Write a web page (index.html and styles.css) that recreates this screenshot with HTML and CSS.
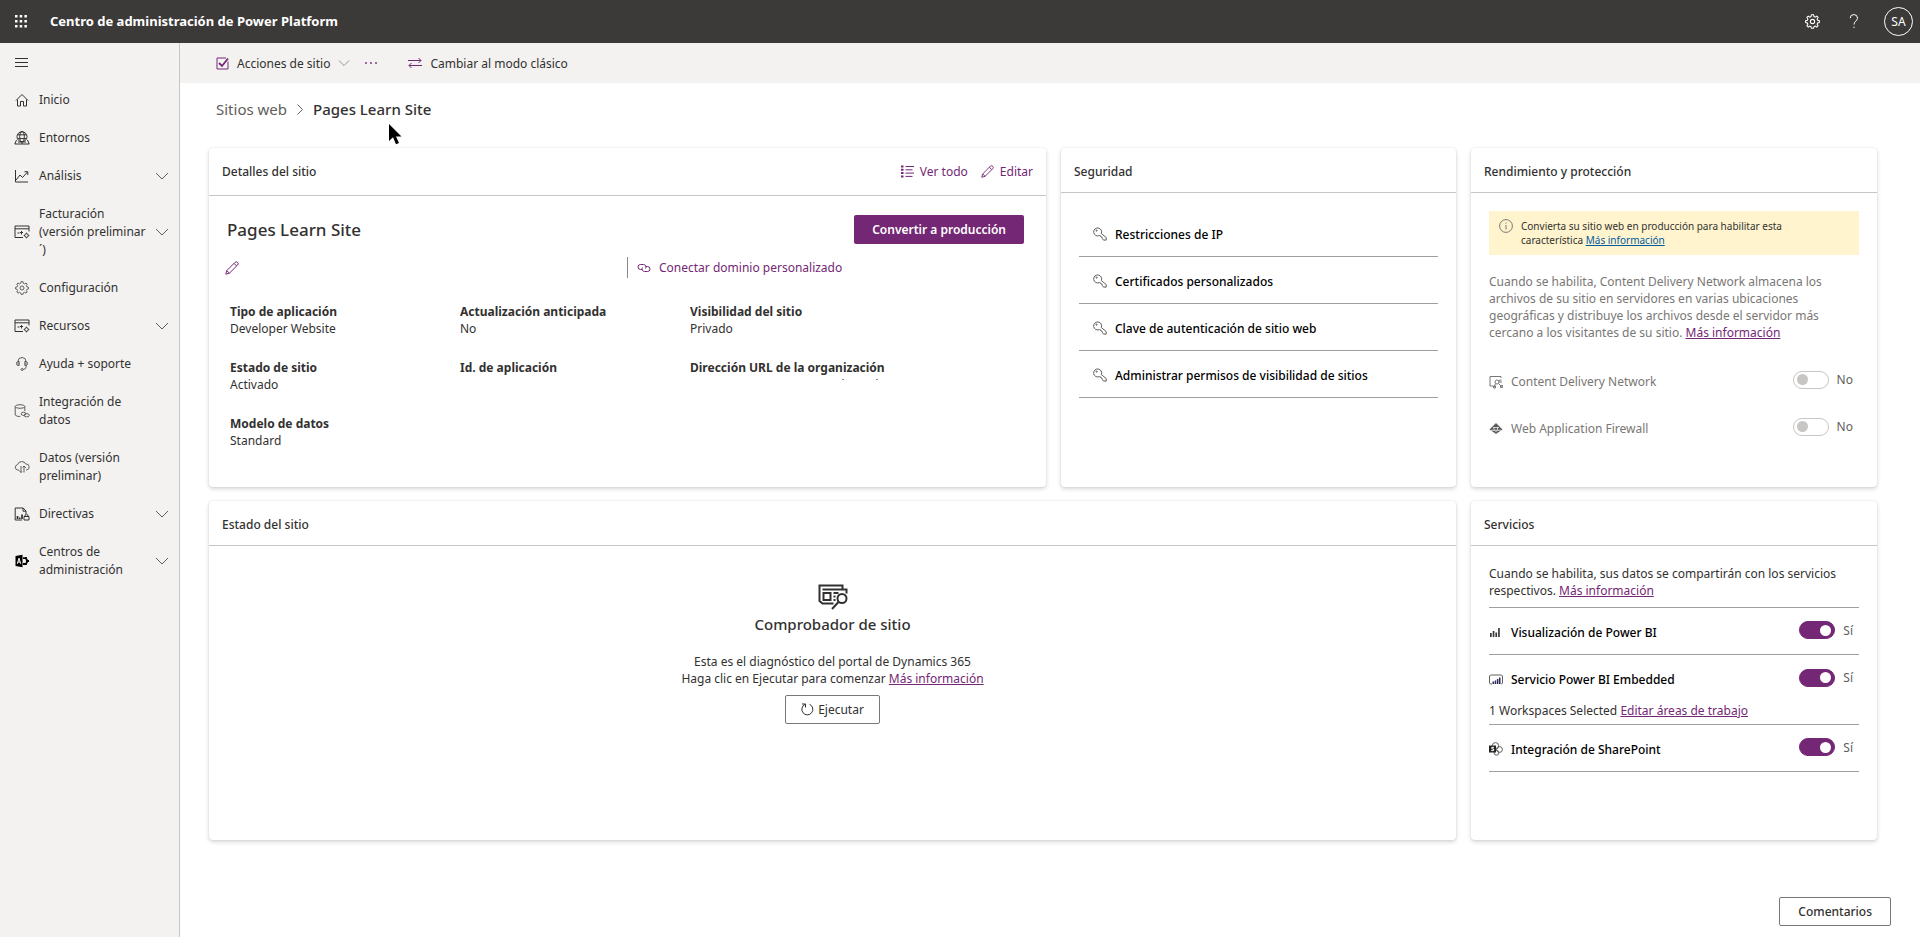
FILE: index.html
```html
<!DOCTYPE html>
<html lang="es">
<head>
<meta charset="utf-8">
<title>Centro de administración de Power Platform</title>
<link rel="stylesheet" href="styles.css">
</head>
<body>
<svg class="sprite" aria-hidden="true">
  <symbol id="chev-down" viewBox="0 0 14 14"><path d="M1 4l6 6 6-6"/></symbol>
  <symbol id="pencil" viewBox="0 0 14 14"><path d="M.8 13.2l1-3.6L10 1.400a1.800 1.800 0 0 1 2.600 2.600L4.400 12.200zM1.800 9.600l2.600 2.600M9 2.400L11.600 5"/></symbol>
  <symbol id="key" viewBox="0 0 14 14"><path d="M8.300 6.600a4 4 0 1 0-2 2l1.200.2.500 1.200 1.100.3.300 1.200 1.100 1.600h2.700v-2.600z"/><circle cx="3.600" cy="3.600" r=".6"/></symbol>
  <symbol id="gear" viewBox="0 0 14 14"><path d="M6 .7h2l.4 1.700 1.100.5 1.500-.9 1.200 1.200-.9 1.500.5 1.100 1.600.4v1.800l-1.600.4-.5 1.100.9 1.500-1.200 1.200-1.500-.9-1.100.5L8 13.300H6l-.4-1.500-1.100-.5-1.500.9L1.800 11l.9-1.500-.5-1.100L.6 8V6.200l1.600-.4.5-1.100-.9-1.500L3 2l1.500.9 1.100-.5z"/><circle cx="7" cy="7" r="2"/></symbol>
  <symbol id="resources" viewBox="0 0 16 14"><path d="M15 6.500V1H1v11.500h8M1 3.800h14M3.500 8h2M6 7.500h3M7.500 6v3.500"/><circle cx="12.500" cy="10.500" r="1.800"/><path d="M12.500 7.700v1M12.500 12.300v1M9.700 10.500h1M14.300 10.500h1"/></symbol>
</svg>

<header class="topbar">
  <button class="icon-btn launcher" aria-label="Iniciador de aplicaciones">
    <svg width="12" height="13" viewBox="0 0 12 13" fill="#fff"><path d="M0 0h2.500v2.500H0zM4.700 0h2.500v2.500H4.700zM9.400 0h2.500v2.500H9.400zM0 5h2.500v2.500H0zM4.700 5h2.500v2.500H4.700zM9.400 5h2.500v2.500H9.400zM0 10h2.500v2.500H0zM4.700 10h2.500v2.500H4.700zM9.400 10h2.500v2.500H9.400z"/></svg>
  </button>
  <h1 class="topbar-title">Centro de administración de Power Platform</h1>
  <div class="topbar-tools">
    <button class="icon-btn" aria-label="Configuración"><svg class="line" width="15" height="15"><use href="#gear"/></svg></button>
    <button class="icon-btn" aria-label="Ayuda"><svg class="line" width="10" height="15" viewBox="0 0 10 15"><path d="M1.200 4.200a3.600 3.600 0 0 1 7.300 0c0 2.700-3.500 3-3.500 6.300M5 12.700v1.300"/></svg></button>
    <button class="icon-btn avatar" aria-label="Cuenta">SA</button>
  </div>
</header>

<div class="shell">
  <nav class="sidebar" aria-label="Principal">
    <button class="icon-btn hamburger" aria-label="Menú"><svg class="line" width="13" height="11" viewBox="0 0 13 11"><path d="M0 1.500h13M0 5.500h13M0 9.500h13"/></svg></button>
    <a class="nav-item" href="#"><svg class="line nav-icon" viewBox="0 0 16 14"><path d="M2 7.500L8 1.500l6 6M3.500 6.500V13h3V8.500h3V13h3V6.500"/></svg><span>Inicio</span></a>
    <a class="nav-item" href="#"><svg class="line nav-icon" viewBox="0 0 16 14"><circle cx="8" cy="5.700" r="5"/><ellipse cx="8" cy="5.700" rx="2.300" ry="5"/><path d="M3.500 3.800h9M3.500 7.600h9M2.500 9L.8 13h14.400L13.500 9M8 11v2M4 11h8"/></svg><span>Entornos</span></a>
    <a class="nav-item" href="#"><svg class="line nav-icon" viewBox="0 0 16 14"><path d="M1.500 1v12H14M2 11l4-5 2.500 2.500L13.500 3M10.500 2.700h3.300V6"/></svg><span>Análisis</span><svg class="line nav-chev"><use href="#chev-down"/></svg></a>
    <a class="nav-item" href="#"><svg class="line nav-icon"><use href="#resources"/></svg><span>Facturación<br>(versión preliminar<br>´)</span><svg class="line nav-chev"><use href="#chev-down"/></svg></a>
    <a class="nav-item" href="#"><svg class="line nav-icon soft"><use href="#gear"/></svg><span>Configuración</span></a>
    <a class="nav-item" href="#"><svg class="line nav-icon"><use href="#resources"/></svg><span>Recursos</span><svg class="line nav-chev"><use href="#chev-down"/></svg></a>
    <a class="nav-item" href="#"><svg class="line nav-icon soft" viewBox="0 0 16 14"><path d="M4 8V4.500a4 4 0 0 1 8 0V8M4 4.500c-1.200 0-1.500.8-1.500 2s.3 2 1.500 2h1.200v-4zM12 4.500c1.200 0 1.500.8 1.500 2s-.3 2-1.500 2h-1.200v-4zM12.200 8.500v1.200q0 2.600-3.200 2.800"/><circle cx="8" cy="12.500" r="1"/></svg><span>Ayuda + soporte</span></a>
    <a class="nav-item" href="#"><svg class="line nav-icon soft" viewBox="0 0 16 14"><ellipse cx="6" cy="2.500" rx="4.800" ry="1.800"/><path d="M1.200 2.500v8.500q1.500 1.700 5 1.500M10.800 2.500V7"/><ellipse cx="9.500" cy="9.800" rx="2.400" ry="1.600"/><ellipse cx="12.700" cy="11.300" rx="2.600" ry="1.600"/></svg><span>Integración de<br>datos</span></a>
    <a class="nav-item" href="#"><svg class="line nav-icon soft" viewBox="0 0 16 14"><path d="M5 10H3.500A2.700 2.700 0 0 1 3.500 4.700 4.500 4.500 0 0 1 11.800 4 3 3 0 0 1 12.500 10H12M7 6v6.500M5 10.500l2 2 1-1M10 12.500V6M8.500 7.500l1.500-1.500 2 2"/></svg><span>Datos (versión<br>preliminar)</span></a>
    <a class="nav-item" href="#"><svg class="line nav-icon" viewBox="0 0 16 14"><path d="M8 13H1.200V1h8l2.800 3v3M9 1v3.200h3M10 9.500h5V13h-5zM11 9.500V8.200q1.500-1.600 3 0v1.300"/><path d="M3.500 9v3M5.700 10.500v1.500M8 7.500V12" stroke-width="1.700"/></svg><span>Directivas</span><svg class="line nav-chev"><use href="#chev-down"/></svg></a>
    <a class="nav-item" href="#"><svg class="nav-icon" viewBox="0 0 16 14"><path fill="#000" d="M1.500 2L8.500.8v12.400L1.500 12z"/><path fill="none" stroke="#fff" d="M3.300 9.800L5 4.200l1.700 5.600M3.900 8h2.200"/><path fill="none" stroke="#000" stroke-width="1.800" d="M9 4.200h2.500l1.300 1.300v3L11.500 10H9M12 3v2M12 9v2M13 7h2"/></svg><span>Centros de<br>administración</span><svg class="line nav-chev"><use href="#chev-down"/></svg></a>
  </nav>

  <main class="main">
    <div class="commands">
      <button class="command"><svg class="line" width="13" height="13" viewBox="0 0 13 13"><path d="M12 4.500V12H1V1h9"/><path d="M3 6l3 3 6-7.500" stroke-width="1.800"/></svg><span>Acciones de sitio</span><svg class="line grey" width="12" height="12"><use href="#chev-down"/></svg></button>
      <button class="command dots" aria-label="Más"><svg width="14" height="4" viewBox="0 0 14 4" fill="#742774"><circle cx="2" cy="2" r=".9"/><circle cx="7" cy="2" r=".9"/><circle cx="12" cy="2" r=".9"/></svg></button>
      <button class="command"><svg class="line" width="14" height="12" viewBox="0 0 14 12"><path d="M0 3.500h13M10.500 1L13 3.500 10.500 6M14 8.500H1M3.500 6L1 8.500 3.500 11"/></svg><span>Cambiar al modo clásico</span></button>
    </div>

    <nav class="breadcrumb" aria-label="Ruta">
      <a href="#">Sitios web</a>
      <svg class="line grey" width="6" height="11" viewBox="0 0 6 11"><path d="M.5.5l5 5-5 5"/></svg>
      <span class="current">Pages Learn Site</span>
      <svg class="pointer" width="13" height="21" viewBox="0 0 13 21" aria-hidden="true"><path d="M0 0v17l4-3.700 3 7 3-1.300-3-6.500h5.500z"/></svg>
    </nav>

    <div class="cards">
      <section class="card">
        <div class="card-head tall">
          <h2>Detalles del sitio</h2>
          <div class="head-actions">
            <button class="text-btn"><svg class="line" width="13" height="13" viewBox="0 0 13 13"><path d="M4.500 1.500H13M4.500 4.800h7M4.500 8.100h8.500M4.500 11.400h7"/><path d="M0 1.500h2.500M0 4.800h2.500M0 8.100h2.500M0 11.400h2.500" stroke-width="2"/></svg>Ver todo</button>
            <button class="text-btn"><svg class="line" width="13" height="13"><use href="#pencil"/></svg>Editar</button>
          </div>
        </div>
        <div class="details">
          <div class="site-row">
            <h3 class="site-name">Pages Learn Site</h3>
            <button class="primary">Convertir a producción</button>
          </div>
          <div class="domain-row">
            <button class="text-btn" aria-label="Editar URL"><svg class="line" width="14" height="14"><use href="#pencil"/></svg></button>
            <button class="text-btn connect"><svg class="line" width="14" height="10" viewBox="0 0 14 10"><path d="M5 6.500H3.500a2.500 2.500 0 0 1 0-5h3a2.500 2.500 0 0 1 2 4M8.500 3.500h2a2.500 2.500 0 0 1 0 5h-3a2.500 2.500 0 0 1-2-4"/></svg>Conectar dominio personalizado</button>
          </div>
          <dl class="facts">
            <div><dt>Tipo de aplicación</dt><dd>Developer Website</dd></div>
            <div><dt>Actualización anticipada</dt><dd>No</dd></div>
            <div><dt>Visibilidad del sitio</dt><dd>Privado</dd></div>
            <div><dt>Estado de sitio</dt><dd>Activado</dd></div>
            <div><dt>Id. de aplicación</dt><dd></dd></div>
            <div><dt>Dirección URL de la organización</dt><dd><svg class="url-marks" width="190" height="4" viewBox="0 0 190 4"><path d="M152 3.500h2M186 3.500h2"/></svg></dd></div>
            <div><dt>Modelo de datos</dt><dd>Standard</dd></div>
          </dl>
        </div>
      </section>

      <section class="card">
        <div class="card-head"><h2>Seguridad</h2></div>
        <ul class="list">
          <li class="ruled"><a class="row" href="#"><svg class="line" width="14" height="14"><use href="#key"/></svg>Restricciones de IP</a></li>
          <li class="ruled"><a class="row" href="#"><svg class="line" width="14" height="14"><use href="#key"/></svg>Certificados personalizados</a></li>
          <li class="ruled"><a class="row" href="#"><svg class="line" width="14" height="14"><use href="#key"/></svg>Clave de autenticación de sitio web</a></li>
          <li class="ruled"><a class="row" href="#"><svg class="line" width="14" height="14"><use href="#key"/></svg>Administrar permisos de visibilidad de sitios</a></li>
        </ul>
      </section>

      <section class="card">
        <div class="card-head"><h2>Rendimiento y protección</h2></div>
        <div class="body">
          <div class="notice">
            <svg class="line" width="14" height="14" viewBox="0 0 14 14"><circle cx="7" cy="7" r="6.400"/><path d="M7 6v4.500M7 3.500v1.200"/></svg>
            <p>Convierta su sitio web en producción para habilitar esta<br>característica <a href="#">Más información</a></p>
          </div>
          <p class="muted">Cuando se habilita, Content Delivery Network almacena los<br>archivos de su sitio en servidores en varias ubicaciones<br>geográficas y distribuye los archivos desde el servidor más<br>cercano a los visitantes de su sitio. <a href="#">Más información</a></p>
          <div class="off-rows">
            <div class="service off">
              <label for="cdn"><svg class="line" width="14" height="14" viewBox="0 0 14 14"><path d="M12 3V1.500H1V11h3"/><circle cx="8" cy="7" r="2"/><path d="M9.500 5.500L12.500 5M9.500 8.500l3 3M6.500 8.500L5 12.500M10 7h3M11.500 10.500h2v2h-2zM4.500 11h2v2h-2z"/></svg>Content Delivery Network</label>
              <span class="switch"><input type="checkbox" role="switch" id="cdn" disabled><span>No</span></span>
            </div>
            <div class="service off">
              <label for="waf"><svg width="14" height="14" viewBox="0 0 14 14"><path fill="#605e5c" d="M7 1l6.500 6.500L7 12 .5 7.500z"/><path stroke="#fff" stroke-width=".7" fill="none" d="M4 5.500h6M2 8.300h10M5 5.500v2.800M8.500 5.500v2.800M7 8.300v2"/></svg>Web Application Firewall</label>
              <span class="switch"><input type="checkbox" role="switch" id="waf" disabled><span>No</span></span>
            </div>
          </div>
        </div>
      </section>

      <section class="card wide">
        <div class="card-head"><h2>Estado del sitio</h2></div>
        <div class="checker">
          <svg class="checker-icon" width="30" height="26" viewBox="0 0 30 26"><path d="M13 19.500H4.500L1.500 17V1.500H24.500v4h4v4M4.500 5.500h20M12.500 19.500h3M5.500 9h7v7h-7zM15.500 9h5M15.500 12.500h2M15.500 16h2"/><circle cx="24" cy="14.500" r="4.500"/><path d="M20.500 18L14 25"/></svg>
          <h3>Comprobador de sitio</h3>
          <p>Esta es el diagnóstico del portal de Dynamics 365<br>Haga clic en Ejecutar para comenzar <a href="#">Más información</a></p>
          <button class="outline"><svg class="line" width="13" height="13" viewBox="0 0 13 13"><path d="M1 1h3.500v3.500M4.200 1.300A5.500 5.500 0 1 0 8.500 1.300"/></svg>Ejecutar</button>
        </div>
      </section>

      <section class="card">
        <div class="card-head"><h2>Servicios</h2></div>
        <div class="body">
          <p class="ruled intro">Cuando se habilita, sus datos se compartirán con los servicios<br>respectivos. <a href="#">Más información</a></p>
          <div class="ruled service">
            <label for="pbi"><svg width="14" height="14" viewBox="0 0 14 14" fill="#3b3a39"><path d="M1 8h1.700v4H1zM3.700 6h1.700v6H3.700zM6.400 7.500h1.700V12H6.400zM9.100 3h1.700v9H9.100z"/></svg>Visualización de Power BI</label>
            <span class="switch"><input type="checkbox" role="switch" id="pbi" checked><span>Sí</span></span>
          </div>
          <div class="ruled">
            <div class="service">
              <label for="pbie"><svg width="14" height="14" viewBox="0 0 14 14"><path fill="none" stroke="#605e5c" d="M3 11H1.500l-1-1V3l1-1h11l1 1v7l-1 1H12"/><path fill="#28285f" d="M3.500 8.500H5V11H3.500zM5.700 7.500h1.500V11H5.700zM7.900 6h1.500v5H7.900zM10 4.500h1.500V11H10z"/></svg>Servicio Power BI Embedded</label>
              <span class="switch"><input type="checkbox" role="switch" id="pbie" checked><span>Sí</span></span>
            </div>
            <p class="workspaces">1 Workspaces Selected <a href="#">Editar áreas de trabajo</a></p>
          </div>
          <div class="ruled service">
            <label for="sp"><svg width="14" height="14" viewBox="0 0 14 14"><g fill="none" stroke="#605e5c"><circle cx="6.500" cy="3.800" r="3.200"/><circle cx="10.500" cy="7.500" r="2.900"/><circle cx="7.500" cy="10.800" r="2.400"/></g><path fill="#252423" d="M0 3.500h7v7H0z"/><path fill="none" stroke="#fff" d="M5 5.300H2.800v1.600h1.800v1.700H2.200"/></svg>Integración de SharePoint</label>
            <span class="switch"><input type="checkbox" role="switch" id="sp" checked><span>Sí</span></span>
          </div>
        </div>
      </section>
    </div>

    <button class="outline feedback">Comentarios</button>
  </main>
</div>
</body>
</html>
```

FILE: styles.css
```css
:root {
  --purple: #742774;
  --ink: #323130;
  --rule: #a19f9d;
}

* { box-sizing: border-box; }

body {
  margin: 0;
  min-height: 100vh;
  display: flex;
  flex-direction: column;
  background: #fff;
  color: var(--ink);
  font-family: "Noto Sans", "Open Sans", sans-serif;
  font-size: 12px;
  line-height: 17px;
}

h1, h2, h3, p, dl, dd, ul { margin: 0; padding: 0; }
ul { list-style: none; }
button { font: inherit; color: inherit; background: none; border: 0; padding: 0; cursor: pointer; }
a { color: var(--purple); }
svg { flex: none; }

.sprite { display: none; }
.line { fill: none; stroke: currentColor; }
.grey { color: #605e5c; }

/* Top bar */
.topbar {
  display: flex;
  align-items: center;
  height: 43px;
  background: #3b3a39;
  color: #fff;
}
.icon-btn { display: flex; align-items: center; justify-content: center; }
.launcher { width: 36px; padding-left: 6px; }
.topbar-title { margin-left: 14px; font-size: 13px; font-weight: 700; }
.topbar-tools { display: flex; align-items: center; margin-left: auto; padding-right: 7px; }
.topbar-tools .icon-btn { width: 42px; }
.topbar-tools .avatar {
  width: 29px;
  height: 29px;
  margin-left: 9px;
  border: 1px solid #fff;
  border-radius: 50%;
}

/* Side navigation */
.shell { display: flex; flex: 1; }
.sidebar {
  flex: none;
  width: 180px;
  background: #f3f2f1;
  border-right: 1px solid #c8c6c4;
}
.hamburger { width: 36px; height: 38px; padding-left: 6px; }
.nav-item {
  display: flex;
  align-items: center;
  padding: 10px 10px 10px 14px;
  color: var(--ink);
  line-height: 18px;
  text-decoration: none;
  white-space: nowrap;
}
.nav-icon { width: 16px; height: 14px; margin-right: 9px; }
.soft { color: #605e5c; }
.nav-chev { width: 14px; height: 14px; margin-left: auto; color: #605e5c; }

/* Page */
.main { flex: 1; min-width: 0; display: flex; flex-direction: column; }
.commands {
  display: flex;
  align-items: center;
  height: 40px;
  padding-left: 36px;
  background: #f3f2f1;
}
.command { display: flex; align-items: center; gap: 8px; }
.command svg { color: var(--purple); }
.command svg.grey { color: #8a8886; }
.dots { margin: 0 30px 0 14px; }

.breadcrumb {
  position: relative;
  display: flex;
  align-items: center;
  gap: 10px;
  height: 52px;
  padding-left: 36px;
  font-size: 15px;
}
.breadcrumb a { color: #605e5c; text-decoration: none; }
.current { font-weight: 500; }
.pointer { position: absolute; left: 209px; top: 41px; }

.cards {
  display: grid;
  grid-template-columns: minmax(0, 837fr) minmax(0, 395fr) minmax(0, 406fr);
  grid-auto-rows: minmax(339px, auto);
  gap: 14px 15px;
  padding: 13px 43px 0 29px;
}
.wide { grid-column: span 2; }
.card {
  background: #fff;
  border-radius: 4px;
  box-shadow: 0 2px 4px rgba(0, 0, 0, .16), 0 0 2px rgba(0, 0, 0, .1);
}
.card-head {
  display: flex;
  align-items: center;
  justify-content: space-between;
  height: 45px;
  padding: 2px 13px 0;
  border-bottom: 1px solid #c8c6c4;
}
.tall { height: 48px; padding-top: 0; }
.card-head h2 { font-size: 12px; font-weight: 500; }
.head-actions { display: flex; gap: 13px; }
.text-btn { display: flex; align-items: center; gap: 6px; color: var(--purple); }

/* Site details */
.details { padding: 19px 22px 18px 16px; }
.site-row { display: flex; align-items: center; justify-content: space-between; padding-left: 2px; }
.site-name { font-size: 17px; font-weight: 500; }
.primary {
  height: 29px;
  padding: 0 18px;
  border-radius: 2px;
  background: var(--purple);
  color: #fff;
  font-weight: 600;
}
.domain-row { display: grid; grid-template-columns: 402px 1fr; margin-top: 13px; }
.connect { height: 21px; padding-left: 9px; border-left: 1px solid #8a8886; gap: 8px; }
.facts {
  display: grid;
  grid-template-columns: 230px 230px 1fr;
  row-gap: 22px;
  padding: 25px 0 0 5px;
}
.facts dt { font-weight: 700; }
.url-marks { display: block; stroke: #8a8886; }

/* Lists and services */
.list { padding: 17px 18px; }
.ruled { border-bottom: 1px solid var(--rule); }
.row {
  display: flex;
  align-items: center;
  gap: 8px;
  height: 46px;
  padding: 2px 0 0 14px;
  color: #000;
  font-weight: 500;
  text-decoration: none;
}
.row svg { color: #605e5c; }
.body { padding: 18px; }
.notice {
  display: flex;
  gap: 8px;
  padding: 8px 10px;
  background: #fff4ce;
  font-size: 10px;
  line-height: 14px;
}
.notice svg { color: #797775; }
.notice a { color: #005a9e; }
.muted { margin-top: 18px; color: #797775; }
.off-rows { padding-top: 16px; }
.service { display: flex; align-items: center; justify-content: space-between; height: 47px; }
.service label { display: flex; align-items: center; gap: 8px; padding-top: 2px; color: #000; font-weight: 500; }
.service.off label { color: #797775; font-weight: 400; }
.switch { display: flex; align-items: center; gap: 8px; padding: 0 6px 2px 0; color: #605e5c; }
.switch input {
  appearance: none;
  display: flex;
  align-items: center;
  width: 36px;
  height: 18px;
  margin: 0;
  padding: 0 3px;
  border: 1px solid #c8c6c4;
  border-radius: 9px;
}
.switch input::before {
  content: "";
  width: 11px;
  height: 11px;
  border-radius: 50%;
  background: #c8c6c4;
}
.switch input:checked { justify-content: flex-end; background: var(--purple); border-color: var(--purple); }
.switch input:checked::before { background: #fff; }
.intro { padding: 1px 0 8px; }
.workspaces { padding-bottom: 5px; }

/* Site checker */
.checker { display: flex; flex-direction: column; align-items: center; padding: 38px 0 0; text-align: center; }
.checker-icon { fill: none; stroke: var(--ink); stroke-width: 2; }
.checker h3 { margin-top: 6px; font-size: 15px; font-weight: 500; }
.checker p { margin: 20px 0 8px; }
.outline {
  display: flex;
  align-items: center;
  justify-content: center;
  gap: 4px;
  height: 29px;
  padding: 0 15px;
  border: 1px solid #797775;
  border-radius: 2px;
}
.feedback { align-self: flex-end; margin: auto 29px 11px 0; padding: 0 18px; font-weight: 500; }
```
